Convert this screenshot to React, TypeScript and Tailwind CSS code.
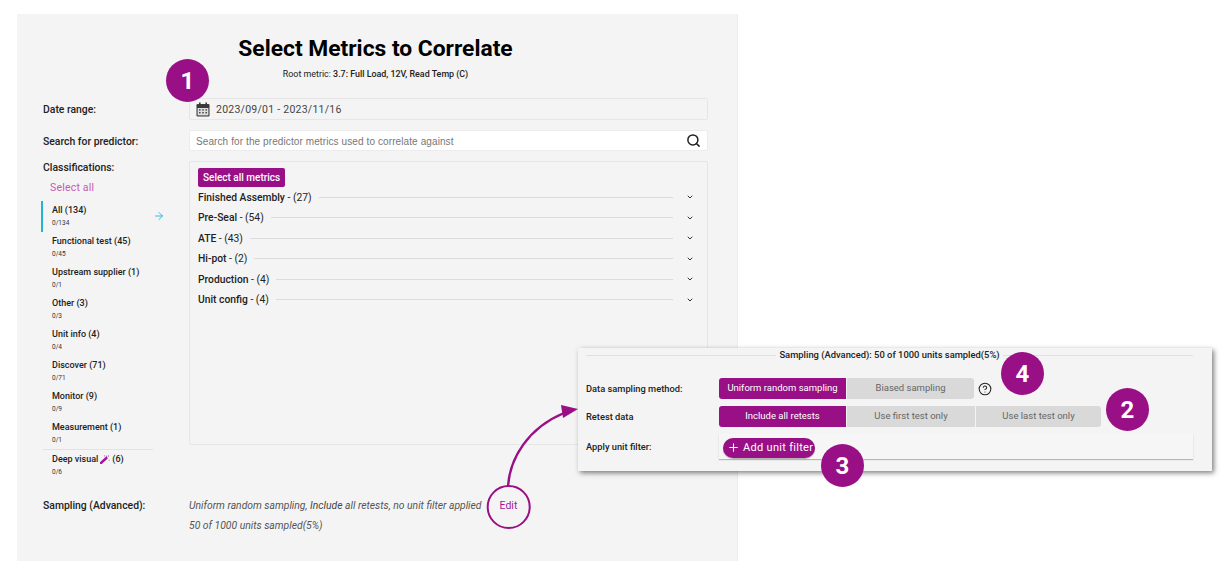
import React from "react";
import { Search, ChevronDown, ArrowRight, Plus, CircleHelp } from "lucide-react";

const cats: [string, string][] = [
  ["All (134)", "0/134"],
  ["Functional test (45)", "0/45"],
  ["Upstream supplier (1)", "0/1"],
  ["Other (3)", "0/3"],
  ["Unit info (4)", "0/4"],
  ["Discover (71)", "0/71"],
  ["Monitor (9)", "0/9"],
  ["Measurement (1)", "0/1"],
];
const groups: [string, string][] = [
  ["Finished Assembly", "(27)"],
  ["Pre-Seal", "(54)"],
  ["ATE", "(43)"],
  ["Hi-pot", "(2)"],
  ["Production", "(4)"],
  ["Unit config", "(4)"],
];

function Badge({ n, cls }: { n: string; cls: string }) {
  return (
    <div className={"absolute w-[43px] h-[43px] rounded-full bg-[#990f85] text-white font-bold text-[24px] flex items-center justify-center " + cls}>
      {n}
    </div>
  );
}

function Cat({ t, s, active }: { t: React.ReactNode; s: string; active?: boolean }) {
  return (
    <div className={"h-[31px] pl-[9px] border-l-[2px] " + (active ? "border-[#1fb6d5]" : "border-transparent")}>
      <div className="text-[9px] leading-[14px] pt-[2px] font-medium text-[#222] whitespace-nowrap">{t}</div>
      <div className="text-[6.5px] leading-[10px] mt-[1px] text-[#333]">{s}</div>
    </div>
  );
}

function Calendar() {
  return (
    <svg width="14" height="15" viewBox="0 0 14 15">
      <rect x="0.5" y="2" width="13" height="12.5" rx="1.2" fill="#3a3a3a" />
      <rect x="3" y="0.5" width="1.6" height="3" fill="#3a3a3a" />
      <rect x="9.4" y="0.5" width="1.6" height="3" fill="#3a3a3a" />
      <rect x="1.6" y="6" width="10.8" height="7.4" fill="#dedede" />
      <g fill="#4a4a4a">
        <rect x="3" y="7.2" width="1.6" height="1.4" />
        <rect x="6.2" y="7.2" width="1.6" height="1.4" />
        <rect x="9.4" y="7.2" width="1.6" height="1.4" />
        <rect x="3" y="10" width="1.6" height="1.4" />
        <rect x="6.2" y="10" width="1.6" height="1.4" />
        <rect x="9.4" y="10" width="1.6" height="1.4" />
      </g>
    </svg>
  );
}

function Wand() {
  return (
    <svg width="10" height="9" viewBox="0 0 10 9" className="inline-block">
      <path d="M1 8 L6.4 3" stroke="#a3189a" strokeWidth="2.4" strokeLinecap="round" />
      <circle cx="8.6" cy="1" r="0.7" fill="#c45ab5" />
      <circle cx="4.6" cy="0.9" r="0.6" fill="#c45ab5" />
      <circle cx="9.2" cy="5" r="0.6" fill="#c45ab5" />
      <path d="M6.6 0.2 L7.4 1.6 L6.2 2.2 Z" fill="#a3189a" />
    </svg>
  );
}

export default function App() {
  return (
    <div className="relative w-[1231px] h-[571px] bg-white overflow-hidden font-['Roboto',sans-serif] text-[#111]">
      <div className="ml-[17px] pt-[14px]">
        <div className="w-[721px] h-[547px] bg-[#f4f4f4] border-r border-[#ececec] pl-[26px] pr-[29px] flex flex-col">
          <div className="text-center pt-[22px] text-[22.8px] leading-[26px] font-bold text-black">Select Metrics to Correlate</div>
          <div className="text-center text-[8.9px] leading-[12px] mt-[6px] text-[#222]">
            Root metric: <span className="font-medium">3.7: Full Load, 12V, Read Temp (C)</span>
          </div>
          <div className="flex mt-[18px] items-center">
            <div className="w-[146px] pt-[2px] text-[10.4px] font-medium text-[#222]">Date range:</div>
            <div className="w-[519px] h-[22px] border border-[#e6e6e6] rounded-[2px] flex items-center pl-[6px] gap-[6px]">
              <Calendar />
              <span className="text-[10.5px] pt-[1px] tracking-[0.25px] text-[#444]">2023/09/01 - 2023/11/16</span>
            </div>
          </div>
          <div className="flex mt-[10px] items-center">
            <div className="w-[146px] pt-[2px] text-[10.4px] font-medium text-[#222]">Search for predictor:</div>
            <div className="w-[519px] h-[21px] bg-white border border-[#ececec] rounded-[2px] flex items-center justify-between pl-[6px] pr-[6px]">
              <span className="text-[10px] pt-[1px] text-[#777] font-['Liberation_Sans',sans-serif] tracking-[0.1px]">Search for the predictor metrics used to correlate against</span>
              <Search size={15} strokeWidth={2.4} className="text-[#222]" />
            </div>
          </div>
          <div className="flex mt-[10px]">
            <div className="w-[146px] pt-[1px]">
              <div className="text-[10.4px] leading-[12px] font-medium text-[#222]">Classifications:</div>
              <div className="text-[10.5px] leading-[12px] mt-[8px] ml-[7px] text-[#c45ab5] tracking-[0.2px]">Select all</div>
              <div className="mt-[7px] -ml-[2px]">
                {cats.map(([t, s], i) => (
                  <Cat key={t} t={t} s={s} active={i === 0} />
                ))}
              </div>
              <div className="border-t border-[#e2e2e2] mr-[36px]">
                <div className="-ml-[2px]">
                  <Cat t={<span className="inline-flex items-center gap-[2px]">Deep visual <Wand /> (6)</span>} s="0/6" />
                </div>
              </div>
            </div>
            <div className="w-[519px] h-[284px] border border-[#e6e6e6] rounded-[2px] pl-[8px] pr-[13px] pt-[6px]">
              <div className="w-fit h-[19px] bg-[#990f85] text-white text-[10px] leading-[19px] px-[5px] rounded-[2px] font-medium">Select all metrics</div>
              <div>
                {groups.map(([a, b]) => (
                  <div key={a} className="flex items-center h-[20.5px]">
                    <span className="text-[10.3px] font-medium text-[#222] whitespace-nowrap">{a} <span className="font-normal">- {b}</span></span>
                    <div className="flex-1 border-t border-[#dcdcdc] ml-[7px] mr-[13px]" />
                    <ChevronDown size={8} strokeWidth={3} className="text-[#333]" />
                  </div>
                ))}
              </div>
            </div>
          </div>
          <div className="flex mt-[15px]">
            <div className="w-[146px] text-[10.4px] leading-[20px] font-medium text-[#222]">Sampling (Advanced):</div>
            <div className="text-[10.35px] leading-[20px] italic text-[#555]">
              <div>Uniform random sampling, <span className="text-[#444]">Include</span> all retests, no unit filter applied</div>
              <div>50 of 1000 units sampled(5%)</div>
            </div>
            <div className="text-[10.5px] leading-[20px] text-[#a3189a] ml-[18px]">Edit</div>
          </div>
        </div>
      </div>

      {/* popover */}
      <div className="absolute left-[578px] top-[348px] w-[634px] h-[123px] bg-[#f4f4f4] shadow-[2px_2px_5px_rgba(0,0,0,0.5)] pl-[8px] pr-[19px]">
        <div className="flex items-center h-[15px]">
          <div className="flex-1 border-t border-[#e0e0e0]" />
          <div className="text-[9.4px] font-medium text-[#222] px-[3px] whitespace-nowrap">Sampling (Advanced): 50 of 1000 units sampled(5%)</div>
          <div className="flex-1 border-t border-[#e0e0e0]" />
        </div>
        <div className="flex items-center mt-[15px] h-[21px]">
          <div className="w-[133px] text-[9.3px] font-medium text-[#222]">Data sampling method:</div>
          <div className="w-[127px] h-full bg-[#990f85] text-white text-[9.5px] rounded-l-[3px] flex items-center justify-center">Uniform random sampling</div>
          <div className="w-[127px] h-full bg-[#d9d9d9] text-[#666] text-[9.5px] rounded-r-[3px] ml-[1px] flex items-center justify-center">Biased sampling</div>
          <CircleHelp size={14} strokeWidth={1.8} className="ml-[4px] text-[#222]" />
        </div>
        <div className="flex items-center mt-[7px] h-[21px]">
          <div className="w-[133px] text-[9.3px] font-medium text-[#222]">Retest data</div>
          <div className="w-[127px] h-full bg-[#990f85] text-white text-[9.5px] rounded-l-[3px] flex items-center justify-center">Include all retests</div>
          <div className="w-[128px] h-full bg-[#d9d9d9] text-[#666] text-[9.5px] ml-[1px] flex items-center justify-center">Use first test only</div>
          <div className="w-[125px] h-full bg-[#d9d9d9] text-[#666] text-[9.5px] rounded-r-[3px] ml-[1px] flex items-center justify-center">Use last test only</div>
        </div>
        <div className="flex items-center mt-[7px] h-[25px]">
          <div className="w-[133px] text-[9.3px] font-medium text-[#222]">Apply unit filter:</div>
          <div className="w-[474px] h-full bg-[#f6f6f6] shadow-[0_1px_1px_rgba(0,0,0,0.25)] flex items-center pl-[4px] pt-[2px]">
            <div className="h-[20px] w-[92px] rounded-full bg-[#990f85] text-white text-[11px] tracking-[0.3px] flex items-center pl-[4px] gap-[3px] shadow-[0_1px_1px_rgba(0,0,0,0.3)]">
              <Plus size={13} strokeWidth={2} />
              <span className="pt-[1px]">Add unit filter</span>
            </div>
          </div>
        </div>
      </div>

      <Badge n="1" cls="left-[166px] top-[59px]" />
      <Badge n="2" cls="left-[1106px] top-[388px]" />
      <Badge n="3" cls="left-[821px] top-[444px]" />
      <Badge n="4" cls="left-[1001px] top-[352px]" />

      <ArrowRight size={12} strokeWidth={1.8} className="absolute left-[153px] top-[210px] text-[#1fb6d5]" />

      {/* annotation */}
      <svg className="absolute left-0 top-0 pointer-events-none" width="1231" height="571" fill="none">
        <circle cx="508.7" cy="507" r="21" stroke="#990f85" strokeWidth="2" />
        <path d="M508 486 C510 458 528 428 564 413" stroke="#990f85" strokeWidth="2.4" />
        <polygon points="578,409 561,405 563,418" fill="#990f85" />
      </svg>
    </div>
  );
}
